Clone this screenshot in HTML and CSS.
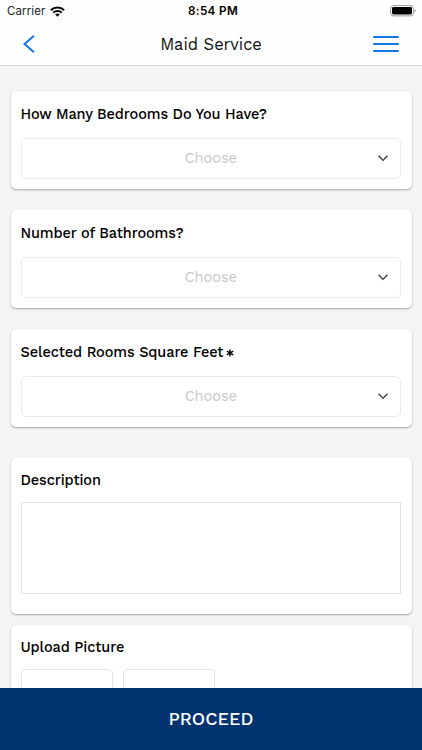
FILE: index.html
```html
<!DOCTYPE html>
<html lang="en">
<head>
<meta charset="utf-8">
<title>Maid Service</title>
<link rel="stylesheet" href="styles.css">
</head>
<body>
<div class="screen">
  <div class="status">
    <div class="carrier"><span>Carrier</span>
      <svg width="15" height="11" viewBox="0 0 15 11" fill="none" stroke="#000" stroke-width="2"><path d="M.9 4.2C4.5.7 10.5.7 14.1 4.2M3.2 6.6c2.4-2.3 6.2-2.3 8.6 0"/><path d="M5.1 8.3c1.4-1.2 3.4-1.2 4.8 0L7.5 10.7z" fill="#000" stroke="none"/></svg>
    </div>
    <div class="time">8:54 PM</div>
    <svg class="battery" width="27" height="12" viewBox="0 0 27 12"><rect x=".6" y=".6" width="22.8" height="10.3" rx="2.8" fill="none" stroke="#999"/><rect x="2" y="2" width="20" height="7.5" rx="1.4"/><path d="M24.6 4v3.6c1.6-.5 1.6-3.1 0-3.6z" fill="#999"/></svg>
  </div>
  <header class="nav">
    <svg width="12" height="18" viewBox="0 0 12 18" fill="none" stroke="#1377e2" stroke-width="2"><path d="M11 .8 1.6 9l9.4 8.2"/></svg>
    <h1>Maid Service</h1>
    <svg width="26" height="18" viewBox="0 0 26 18" fill="none" stroke="#1377e2" stroke-width="2" stroke-linecap="round"><path d="M1 2h24M1 9h24M1 16h24"/></svg>
  </header>
  <main class="form">
    <section class="card">
      <h2>How Many Bedrooms Do You Have?</h2>
      <div class="select"><span>Choose</span><svg width="10" height="7" viewBox="0 0 10 7" fill="none" stroke="#333" stroke-width="1.3"><path d="m.6.8 4.4 4.6L9.4.8"/></svg></div>
    </section>
    <section class="card">
      <h2>Number of Bathrooms?</h2>
      <div class="select"><span>Choose</span><svg width="10" height="7" viewBox="0 0 10 7" fill="none" stroke="#333" stroke-width="1.3"><path d="m.6.8 4.4 4.6L9.4.8"/></svg></div>
    </section>
    <section class="card">
      <h2>Selected Rooms Square Feet<svg class="star" width="8" height="8" viewBox="0 0 8 8" stroke="#000" stroke-width="1.4"><path d="M4 .5v7M.8 2.2l6.4 3.6M7.2 2.2.8 5.8"/></svg></h2>
      <div class="select"><span>Choose</span><svg width="10" height="7" viewBox="0 0 10 7" fill="none" stroke="#333" stroke-width="1.3"><path d="m.6.8 4.4 4.6L9.4.8"/></svg></div>
    </section>
    <section class="card description">
      <h2>Description</h2>
      <div class="textarea"></div>
    </section>
    <section class="card upload">
      <h2>Upload Picture</h2>
      <div class="slots"><div class="slot"></div><div class="slot"></div></div>
    </section>
  </main>
  <footer class="proceed"><span>PROCEED</span></footer>
</div>
</body>
</html>
```
FILE: styles.css
```css
* { box-sizing: border-box; }
body { margin: 0; font-family: "Work Sans", Inter, sans-serif; color: #000; }
.screen { width: 422px; height: 750px; display: flex; flex-direction: column; overflow: hidden; background: #f4f4f4; }
.status { height: 22px; flex: none; display: grid; grid-template-columns: 1fr auto 1fr; align-items: center; padding: 0 5px 0 7px; background: #fefefe; font-family: Inter, sans-serif; }
.carrier { display: flex; align-items: center; gap: 5px; font-size: 11.5px; letter-spacing: .1px; color: #222; }
.time { font-size: 11.7px; font-weight: 600; letter-spacing: .35px; line-height: 22px; padding-left: 2px; }
.battery { justify-self: end; }
.nav { height: 44px; flex: none; display: flex; justify-content: space-between; align-items: center; padding: 0 23px; background: #fefefe; border-bottom: 1px solid #d9d9d9; }
.nav h1 { margin: 2px 0 0 14px; font-size: 16.5px; font-weight: 400; letter-spacing: -.05px; line-height: 42px; color: #111; }
.form { flex: 1; min-height: 0; overflow: hidden; padding: 25px 10.5px 0; display: flex; flex-direction: column; }
.card { flex: none; height: 98px; margin-bottom: 21px; padding: 0 10.5px 0 10px; border-radius: 5px; background: #fff; box-shadow: 0 1px 2px rgba(0,0,0,.32); }
.card h2 { margin: 0; height: 47px; display: flex; align-items: center; font-size: 14.5px; font-weight: 500; letter-spacing: -.1px; white-space: nowrap; }
.select { height: 41px; border: 1px solid #ebebeb; border-radius: 5px; display: grid; grid-template-columns: 1fr auto 1fr; align-items: center; padding: 0 12px 2px; color: #c8c8cc; font-size: 14.6px; letter-spacing: -.08px; }
.select span { grid-column: 2; }
.select svg { justify-self: end; margin-top: 2px; }
.star { margin: 0 0 0 3px; }
.description { height: 156px; margin: 10px 0 11px; }
.description h2 { height: 44px; }
.textarea { height: 92px; border: 1px solid #e2e2e2; }
.upload { height: 150px; margin: 0; }
.upload h2 { height: 44px; }
.slots { display: flex; gap: 10px; }
.slot { width: 92px; height: 92px; border: 1px solid #e4e4e4; border-radius: 4px; }
.proceed { height: 62px; flex: none; display: flex; align-items: center; justify-content: center; padding-bottom: 1px; background: #00336f; color: #fff; font-size: 18px; font-weight: 500; letter-spacing: .05px; }
```
